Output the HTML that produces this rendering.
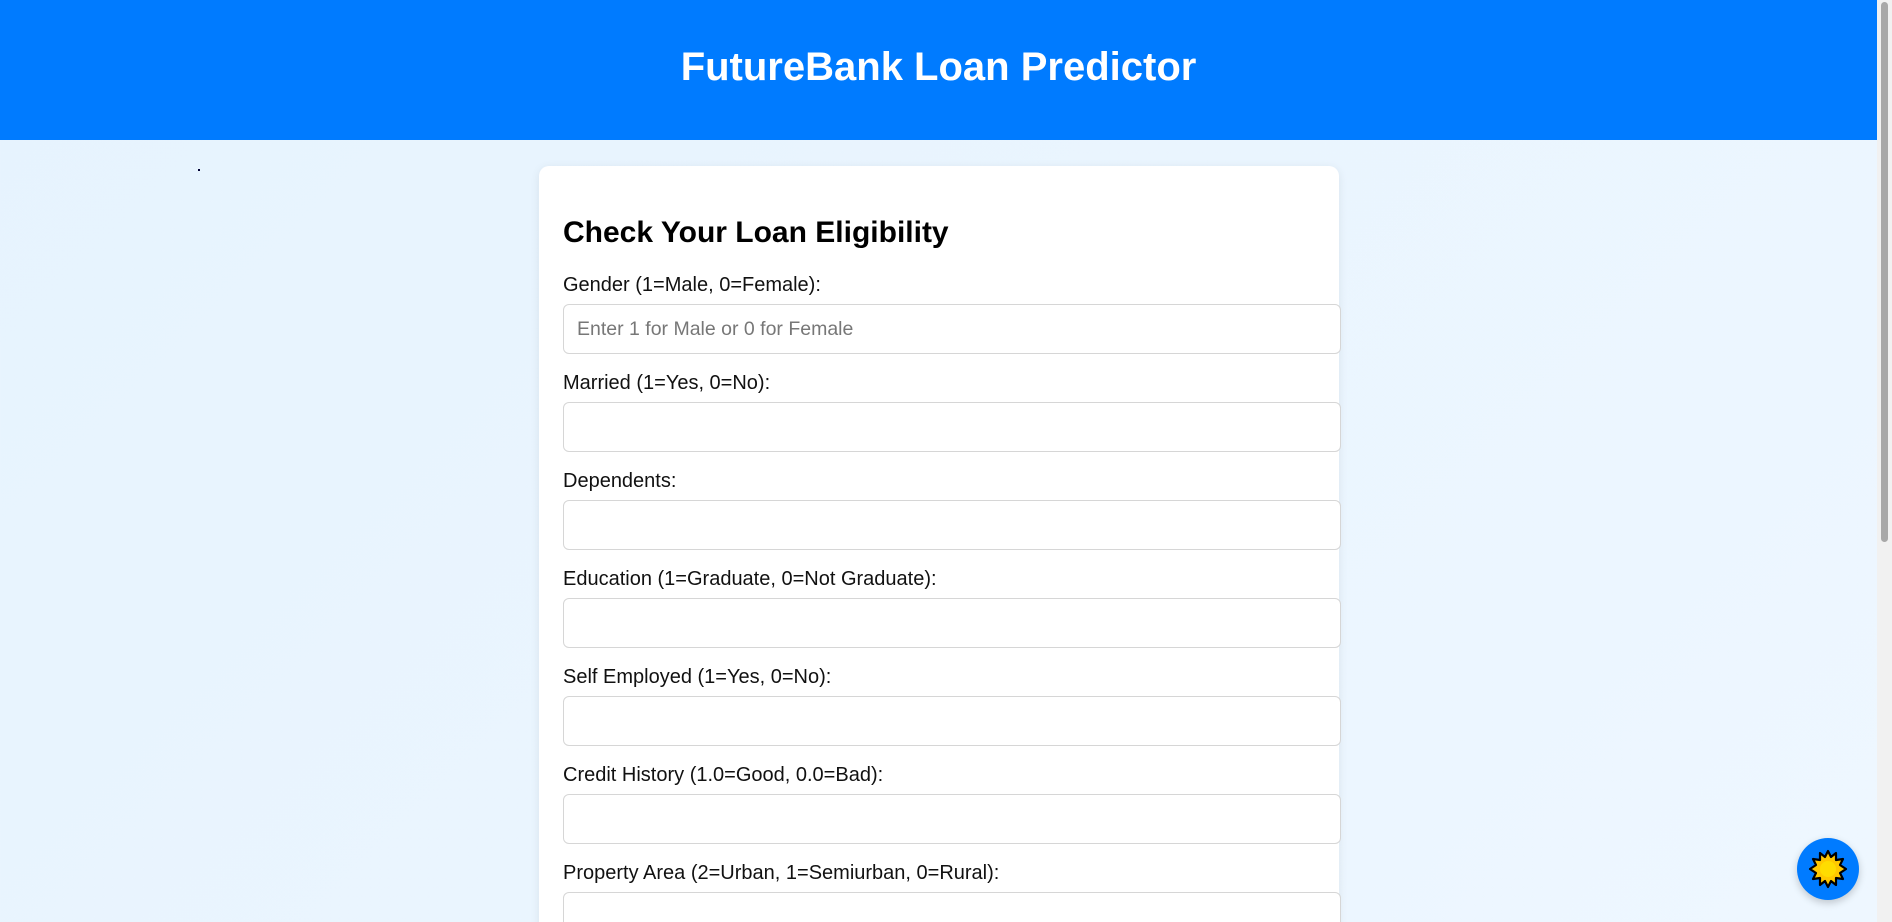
<!DOCTYPE html>
<html><head><meta charset="utf-8"><style>
html,body{margin:0;padding:0;width:1892px;height:922px;overflow:hidden;font-family:"Liberation Sans",Arial,sans-serif;}
body{background:linear-gradient(135deg,#e6f3fe,#eef7ff);position:relative;}
.hdr{position:absolute;left:0;top:0;width:1877px;height:140px;background:#007bff;color:#fff;text-align:center;font-weight:bold;font-size:40px;line-height:134px;}
.sb{position:absolute;right:0;top:0;width:15px;height:922px;background:#f1f1f1;}
.sb i{position:absolute;left:4px;top:2px;width:7px;height:540px;background:#a8a8a8;border-radius:4px;}
.card{position:absolute;left:539px;top:166px;width:800px;height:800px;background:#fff;border-radius:10px;box-shadow:0 2px 10px rgba(0,0,0,0.08);}
h2{position:absolute;left:563px;top:216px;margin:0;font-size:30px;font-weight:bold;color:#000;}
.l{position:absolute;left:563px;font-size:20px;color:#111;}
.in{position:absolute;left:563px;border:1px solid #d6d6d6;border-radius:6px;background:#fff;font-size:19.5px;color:#777;line-height:48px;padding-left:13px;box-sizing:border-box;width:778px;height:50px;}
.btn{position:absolute;left:1797px;top:838px;width:62px;height:62px;border-radius:50%;background:#007bff;box-shadow:0 3px 8px rgba(0,0,0,0.2);}
</style></head><body>
<div class="hdr">FutureBank Loan Predictor</div>
<div style="position:absolute;left:198px;top:169px;width:2px;height:2px;background:#003"></div>
<div class="card"></div>
<h2>Check Your Loan Eligibility</h2>
<div class="l" style="top:274px">Gender (1=Male, 0=Female):</div>
<div class="in" style="top:304px">Enter 1 for Male or 0 for Female</div>
<div class="l" style="top:372px">Married (1=Yes, 0=No):</div>
<div class="in" style="top:402px"></div>
<div class="l" style="top:470px">Dependents:</div>
<div class="in" style="top:500px"></div>
<div class="l" style="top:568px">Education (1=Graduate, 0=Not Graduate):</div>
<div class="in" style="top:598px"></div>
<div class="l" style="top:666px">Self Employed (1=Yes, 0=No):</div>
<div class="in" style="top:696px"></div>
<div class="l" style="top:764px">Credit History (1.0=Good, 0.0=Bad):</div>
<div class="in" style="top:794px"></div>
<div class="l" style="top:862px">Property Area (2=Urban, 1=Semiurban, 0=Rural):</div>
<div class="in" style="top:892px"></div>
<div class="btn"><svg width="62" height="62" viewBox="0 0 62 62"><polygon points="31,13 34,19 39,15 39,22 46,21 43,27 49,31 43,35 46,41 39,40 39,47 34,43 31,49 28,43 23,47 23,40 16,41 19,35 13,31 19,27 16,21 23,22 23,15 28,19" fill="#ffc800" stroke="#000" stroke-width="2.2" stroke-linejoin="round"/><circle cx="31" cy="31" r="8" fill="#ffdc00"/></svg></div>
<div class="sb"><i></i></div>
</body></html>
